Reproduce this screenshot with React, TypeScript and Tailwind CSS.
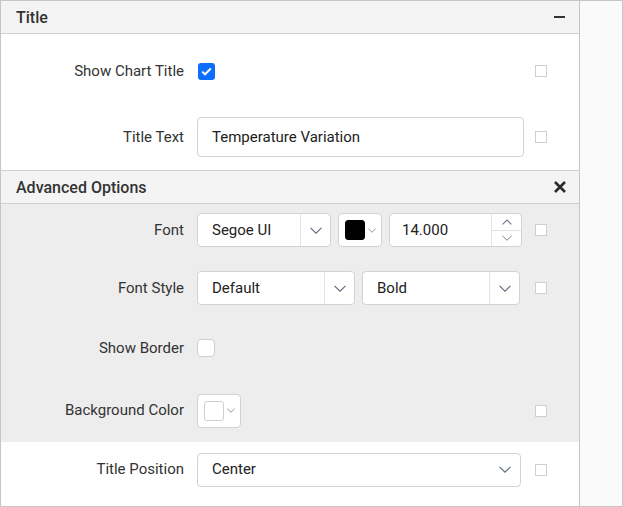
import React from 'react';

const Chevron = ({ w = 12, h = 7, color = '#5f6b7a' }: { w?: number; h?: number; color?: string }) => (
  <svg width={w} height={h} viewBox="0 0 12 7" fill="none">
    <path d="M0.5 0.8 L6 6.2 L11.5 0.8" stroke={color} strokeWidth="1.1" />
  </svg>
);

const ChevronUp = ({ color = '#6c7a89' }: { color?: string }) => (
  <svg width={10} height={6} viewBox="0 0 10 6" fill="none">
    <path d="M0.6 5.4 L5 1 L9.4 5.4" stroke={color} strokeWidth="1.1" />
  </svg>
);

const SideBox = () => (
  <span className="ml-[11px] block w-[12px] h-[12px] border border-[#cfcfcf] bg-white" />
);

function Row({ label, children, box = true, className = '' }: { label: string; children: React.ReactNode; box?: boolean; className?: string }) {
  return (
    <div className={`flex items-center ${className}`}>
      <div className="w-[183px] text-right text-[15px] text-[#333]">{label}</div>
      <div className="ml-[13px] w-[327px] flex items-center">{children}</div>
      {box && <SideBox />}
    </div>
  );
}

function Select({ value, width, sep = true }: { value: string; width: string; sep?: boolean }) {
  return (
    <div className={`${width} h-[34px] flex items-stretch bg-white border border-[#d2d2d2] rounded-[4px]`}>
      <div className="flex-1 flex items-center pl-[14px] text-[15px] text-[#222]">{value}</div>
      <div className={`w-[30px] flex items-center justify-center ${sep ? 'border-l border-[#e3e3e3]' : ''}`}>
        <Chevron />
      </div>
    </div>
  );
}

function ColorPick({ swatch }: { swatch: string }) {
  return (
    <div className="w-[44px] h-[34px] flex items-center pl-[6px] bg-white border border-[#d2d2d2] rounded-[4px]">
      <span className={`w-[20px] h-[20px] rounded-[3px] border ${swatch}`} />
      <span className="ml-[3px]">
        <Chevron w={8} h={5} color="#7a6a6a" />
      </span>
    </div>
  );
}

export default function App() {
  return (
    <div className="w-[623px] h-[507px] border border-[#c6c6c6] flex bg-[#fafafa] font-['Roboto',sans-serif] overflow-hidden">
      <div className="w-[579px] flex-none border-r border-[#c6c6c6] bg-white flex flex-col">
        {/* Title */}
        <div className="h-[33px] flex-none flex items-center justify-between border-b border-[#d0d0d0] bg-[#f4f4f4] pl-[15px] pr-[13px]">
          <span className="text-[16px] font-medium text-[#333] pt-[2px]">Title</span>
          <span className="block w-[11px] h-[2px] bg-[#333] mr-[1px]" />
        </div>
        <div className="flex-none h-[136px] pt-[20px]">
          <Row label="Show Chart Title" className="h-[34px]">
            <span className="w-[17px] h-[17px] rounded-[3px] bg-[#0d6efd] flex items-center justify-center ml-[1px]">
              <svg width="11" height="9" viewBox="0 0 11 9" fill="none">
                <path d="M1.2 4.6 L4 7.3 L9.8 1.5" stroke="white" strokeWidth="2" />
              </svg>
            </span>
          </Row>
          <Row label="Title Text" className="mt-[29px] h-[40px]">
            <div className="w-[327px] h-[40px] flex items-center pl-[14px] bg-white border border-[#d2d2d2] rounded-[4px] text-[15px] text-[#222]">
              Temperature Variation
            </div>
          </Row>
        </div>

        {/* Advanced Options */}
        <div className="h-[34px] flex-none flex items-center justify-between border-t border-b border-[#d0d0d0] bg-[#f4f4f4] pl-[15px] pr-[12px]">
          <span className="text-[16px] font-medium text-[#333] pt-[2px]">Advanced Options</span>
          <svg width="14" height="12" viewBox="0 0 14 12" fill="none">
            <path d="M2 1 L12 11 M12 1 L2 11" stroke="#2b2b2b" strokeWidth="2.6" />
          </svg>
        </div>
        <div className="flex-none h-[238px] bg-[#ededed] pt-[9px]">
          <Row label="Font" className="h-[34px]">
            <Select value="Segoe UI" width="w-[134px]" />
            <div className="ml-[7px]">
              <ColorPick swatch="bg-black border-black" />
            </div>
            <div className="ml-[7px] w-[133px] h-[34px] flex items-stretch bg-white border border-[#d2d2d2] rounded-[4px]">
              <div className="flex-1 flex items-center pl-[12px] text-[15px] text-[#222]">14.000</div>
              <div className="w-[30px] flex flex-col border-l border-[#e3e3e3]">
                <div className="flex-1 flex items-center justify-center border-b border-[#e3e3e3]">
                  <ChevronUp />
                </div>
                <div className="flex-1 flex items-center justify-center">
                  <Chevron w={10} h={6} color="#6c7a89" />
                </div>
              </div>
            </div>
          </Row>
          <Row label="Font Style" className="mt-[24px] h-[34px]">
            <Select value="Default" width="w-[158px]" />
            <div className="ml-[7px]">
              <Select value="Bold" width="w-[158px]" />
            </div>
          </Row>
          <Row label="Show Border" box={false} className="mt-[26px] h-[34px]">
            <span className="w-[18px] h-[18px] rounded-[4px] bg-white border border-[#cfcfcf]" />
          </Row>
          <Row label="Background Color" className="mt-[28px] h-[35px]">
            <ColorPick swatch="bg-white border-[#cfcfcf]" />
          </Row>
        </div>
        <div className="flex-1 bg-white pt-[10px]">
          <Row label="Title Position" className="h-[35px]">
            <Select value="Center" width="w-[324px]" sep={false} />
          </Row>
        </div>
      </div>
      <div className="flex-1" />
    </div>
  );
}
